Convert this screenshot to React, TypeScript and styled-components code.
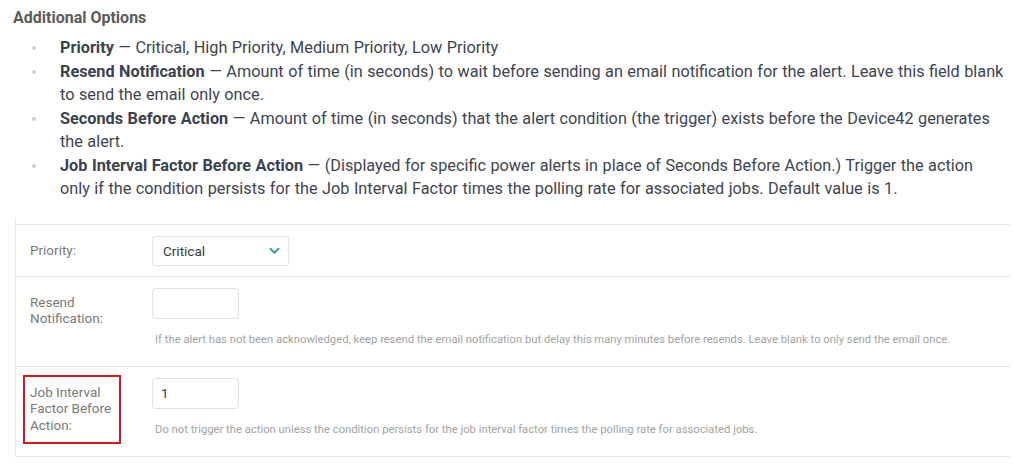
import React from "react";
import styled, { createGlobalStyle } from "styled-components";

const Global = createGlobalStyle`
  html, body { margin: 0; padding: 0; background: #ffffff; }
  body { font-family: Roboto, "Liberation Sans", Arial, sans-serif; }
`;

const Page = styled.div`
  width: 1013px;
  height: 476px;
  overflow: hidden;
  background: #fff;
  padding-top: 8px;
  box-sizing: border-box;
`;

const Heading = styled.h3`
  margin: 0 0 0 13px;
  font-size: 16px;
  line-height: 19px;
  font-weight: 700;
  color: #5b5b5b;
`;

const List = styled.ul`
  list-style: none;
  margin: 9px 0 0 0;
  padding: 0 8px 0 60px;
  font-size: 16.25px;
  line-height: 23.5px;
  word-spacing: 0.45px;
  color: #3e4451;
`;

const Item = styled.li`
  position: relative;
  &::before {
    content: "";
    position: absolute;
    left: -28px;
    top: 10px;
    width: 4px;
    height: 4px;
    border-radius: 50%;
    background: #cdcdcd;
  }
`;

const Term = styled.strong`
  font-weight: 700;
  color: #3b4350;
`;

const Panel = styled.div`
  margin: 17px 3px 0 15px;
  padding-top: 6px;
  border-left: 1px solid #e8e8e8;
`;

const Row = styled.div<{ $pb: number; $last?: boolean }>`
  display: grid;
  grid-template-columns: 122px 1fr;
  padding: 11px 0 ${(p) => p.$pb}px 14px;
  border-top: 1px solid #e6e6e6;
  ${(p) => (p.$last ? "border-bottom: 1px solid #e6e6e6;" : "")}
`;

const Label = styled.div<{ $highlight?: boolean }>`
  font-size: 13.5px;
  line-height: 16.5px;
  color: #7a7a7a;
  padding-top: 6px;
  align-self: start;
  width: 84px;
  ${(p) =>
    p.$highlight
      ? `
    border: 2px solid #d71920;
    padding: 7px 5px 9px 5px;
    margin: -3px 0 -11px -7px;
  `
      : ""}
`;

const Field = styled.div`
  display: flex;
  flex-direction: column;
  align-items: flex-start;
`;

const SelectBox = styled.div`
  width: 137px;
  height: 30px;
  box-sizing: border-box;
  border: 1px solid #e2e2e2;
  border-radius: 3px;
  display: flex;
  align-items: center;
  justify-content: space-between;
  padding: 0 8px 0 10px;
  font-size: 13.5px;
  color: #333a44;
`;

const TextInput = styled.div`
  width: 87px;
  height: 31px;
  box-sizing: border-box;
  border: 1px solid #e2e2e2;
  border-radius: 4px;
  display: flex;
  align-items: center;
  padding-left: 8px;
  font-size: 13.5px;
  color: #333a44;
`;

const Help = styled.div`
  margin-top: 13px;
  padding-left: 3px;
  font-size: 11.25px;
  line-height: 16px;
  color: #a3a3a3;
  white-space: nowrap;
`;

const Chevron = () => (
  <svg width="11" height="8" viewBox="0 0 11 8" aria-hidden="true">
    <polyline
      points="1.5,1.8 5.5,5.8 9.5,1.8"
      fill="none"
      stroke="#3a9ea7"
      strokeWidth="2"
      strokeLinecap="round"
      strokeLinejoin="round"
    />
  </svg>
);

export default function App() {
  return (
    <Page>
      <Global />
      <Heading>Additional Options</Heading>
      <List>
        <Item>
          <Term>Priority</Term> — Critical, High Priority, Medium Priority, Low Priority
        </Item>
        <Item>
          <Term>Resend Notification</Term> — Amount of time (in seconds) to wait before sending an email
          notification for the alert. Leave this field blank to send the email only once.
        </Item>
        <Item>
          <Term>Seconds Before Action</Term> — Amount of time (in seconds) that the alert condition (the
          trigger) exists before the Device42 generates the alert.
        </Item>
        <Item>
          <Term>Job Interval Factor Before Action</Term> — (Displayed for specific power alerts in place of
          Seconds Before Action.) Trigger the action only if the condition persists for the Job Interval Factor
          times the polling rate for associated jobs. Default value is 1.
        </Item>
      </List>
      <Panel>
        <Row $pb={10}>
          <Label>Priority:</Label>
          <Field>
            <SelectBox>
              <span>Critical</span>
              <Chevron />
            </SelectBox>
          </Field>
        </Row>
        <Row $pb={18}>
          <Label>Resend Notification:</Label>
          <Field>
            <TextInput />
            <Help>
              If the alert has not been acknowledged, keep resend the email notification but delay this many
              minutes before resends. Leave blank to only send the email once.
            </Help>
          </Field>
        </Row>
        <Row $pb={18} $last>
          <Label $highlight>Job Interval Factor Before Action:</Label>
          <Field>
            <TextInput>1</TextInput>
            <Help>
              Do not trigger the action unless the condition persists for the job interval factor times the
              polling rate for associated jobs.
            </Help>
          </Field>
        </Row>
      </Panel>
    </Page>
  );
}
